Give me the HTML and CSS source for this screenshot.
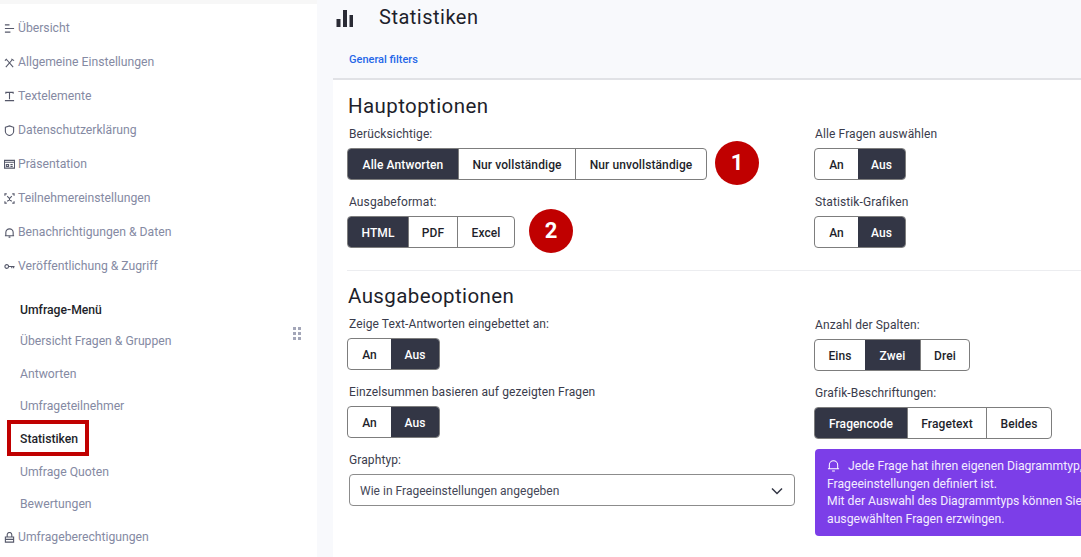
FILE: index.html
```html
<!DOCTYPE html>
<html lang="de">
<head>
  <meta charset="UTF-8">
  <title>Statistiken</title>
  <link rel="stylesheet" href="styles.css">
</head>
<body>
<div class="page">
  <div class="sidebar">
    <ul class="settings">
      <li><svg viewBox="0 0 12 12"><path d="M1 2h5M1 6h10M1 10h6"/></svg>Übersicht</li>
      <li><svg viewBox="0 0 12 12"><path d="M2 11L9 3M10 11L3 3M1 4l2-2M8 2l3 2"/></svg>Allgemeine Einstellungen</li>
      <li><svg viewBox="0 0 12 12"><path d="M2 3V1.500h8V3M6 1.500V9M1 10.500h10"/></svg>Textelemente</li>
      <li><svg viewBox="0 0 12 12"><path d="M1.500 2.500L6 1l4.500 1.500V7C10.500 9 8 11 6 11.500 4 11 1.500 9 1.500 7z"/></svg>Datenschutzerklärung</li>
      <li><svg viewBox="0 0 12 12"><path d="M.5 1.500h11v8.500H.5zM.5 3.500h11M2.500 6h2.500v2H2.500zM7 6h2.500M7 8h2.500"/></svg>Präsentation</li>
      <li><svg viewBox="0 0 12 12"><path d="M1 3V1h2M9 1h2v2M1 9v2h2M11 9v2H9M3.500 3.500l2 2M8.500 3.500l-2 2M6 5v3M3.500 9L6 7.500 8.500 9"/></svg>Teilnehmereinstellungen</li>
      <li><svg viewBox="0 0 12 12"><path d="M2 9.500V6a4 4 0 0 1 8 0v3.500M1 9.500h10M5 11h2"/></svg>Benachrichtigungen &amp; Daten</li>
      <li><svg viewBox="0 0 12 12"><circle cx="3" cy="6" r="2"/><path d="M5 6h6.500M8.500 6v2M10.500 6v2"/></svg>Veröffentlichung &amp; Zugriff</li>
    </ul>
    <div class="menu-title">Umfrage-Menü</div>
    <div class="drag"><i></i><i></i><i></i><i></i><i></i><i></i></div>
    <ul class="survey">
      <li>Übersicht Fragen &amp; Gruppen</li>
      <li>Antworten</li>
      <li>Umfrageteilnehmer</li>
      <li class="current">Statistiken<span class="redbox"></span></li>
      <li>Umfrage Quoten</li>
      <li>Bewertungen</li>
    </ul>
    <ul class="settings last">
      <li><svg viewBox="0 0 12 12"><path d="M1.500 5.500h9v5.500h-9zM3.500 5.500V3a2.500 2.500 0 0 1 5 0v2.500M1.500 8h9"/></svg>Umfrageberechtigungen</li>
    </ul>
  </div>

  <div class="main">
    <div class="top">
      <div class="title-row">
        <svg class="chart" viewBox="0 0 16 17"><path d="M0 9h4v8H0zM6.500 0h4v17h-4zM13 5h3.500v12H13z"/></svg>
        <span class="title">Statistiken</span>
      </div>
      <a class="filters">General filters</a>
    </div>

    <div class="content">
      <div class="block first">
        <div class="col">
          <h2>Hauptoptionen</h2>
          <label>Berücksichtige:</label>
          <div class="row gap-8">
            <div class="btns">
              <span class="on w110">Alle Antworten</span><span class="w117">Nur vollständige</span><span class="w131">Nur unvollständige</span>
            </div>
            <div class="num">1</div>
          </div>
          <label>Ausgabeformat:</label>
          <div class="row gap-14">
            <div class="btns">
              <span class="on w60">HTML</span><span class="w49">PDF</span><span class="w57">Excel</span>
            </div>
            <div class="num">2</div>
          </div>
        </div>
        <div class="col right">
          <label>Alle Fragen auswählen</label>
          <div class="btns">
            <span class="w43">An</span><span class="on w47">Aus</span>
          </div>
          <label>Statistik-Grafiken</label>
          <div class="btns">
            <span class="w43">An</span><span class="on w47">Aus</span>
          </div>
        </div>
      </div>

      <hr>

      <div class="block second">
        <div class="col">
          <h2>Ausgabeoptionen</h2>
          <label>Zeige Text-Antworten eingebettet an:</label>
          <div class="btns">
            <span class="w43">An</span><span class="on w48">Aus</span>
          </div>
          <label>Einzelsummen basieren auf gezeigten Fragen</label>
          <div class="btns">
            <span class="w43">An</span><span class="on w48">Aus</span>
          </div>
          <label>Graphtyp:</label>
          <div class="select">
            Wie in Frageeinstellungen angegeben
            <svg viewBox="0 0 12 8"><path d="M1 1.500l5 5 5-5"/></svg>
          </div>
        </div>
        <div class="col right">
          <label>Anzahl der Spalten:</label>
          <div class="btns">
            <span class="w50">Eins</span><span class="on w55">Zwei</span><span class="w49">Drei</span>
          </div>
          <label>Grafik-Beschriftungen:</label>
          <div class="btns">
            <span class="on w92">Fragencode</span><span class="w79">Fragetext</span><span class="w65">Beides</span>
          </div>
          <div class="alert">
            <svg viewBox="0 0 14 14"><path d="M2.500 10.500V6.500a4.500 4.500 0 0 1 9 0v4M1 10.500h12M5.500 13h3"/></svg>Jede Frage hat ihren eigenen Diagrammtyp,<br>
            Frageeinstellungen definiert ist.<br>
            Mit der Auswahl des Diagrammtyps können Sie<br>
            ausgewählten Fragen erzwingen.
          </div>
        </div>
      </div>
    </div>
  </div>
</div>
</body>
</html>
```
FILE: styles.css
```css
* {
  box-sizing: border-box;
}

html, body {
  margin: 0;
  height: 100%;
  overflow: hidden;
}

body {
  font-family: Roboto, Arial, sans-serif;
  background-color: #f8f9fc;
  color: #1e1f2b;
}

ul {
  list-style: none;
  margin: 0;
  padding: 0;
}

.page {
  display: flex;
  height: 557px;
  width: 1081px;
  overflow: hidden;
}

/* left menu */
.sidebar {
  position: relative;
  width: 317px;
  flex: none;
  background-color: #fff;
  border-top: 4px solid #f7f7f7;
  padding-top: 7px;
  font-size: 12.200px;
  color: #858aa3;
}

.settings li {
  display: flex;
  align-items: center;
  height: 34px;
  padding-left: 4px;
}

.settings svg {
  width: 11px;
  height: 11px;
  margin-right: 3px;
  flex: none;
  fill: none;
  stroke: #55586a;
  stroke-width: 1.200;
}

.settings.last {
  margin-top: -1px;
}

.menu-title {
  margin: 17px 0 0 20px;
  height: 20px;
  line-height: 20px;
  font-weight: 500;
  color: #1e1f2b;
}

.drag {
  position: absolute;
  left: 293px;
  top: 323px;
  display: grid;
  grid-template-columns: 3px 3px;
  gap: 2px 2px;
}

.drag i {
  width: 3px;
  height: 3px;
  background-color: #a3a6b8;
}

.survey {
  margin-top: 5px;
}

.survey li {
  position: relative;
  height: 32.700px;
  line-height: 32.700px;
  padding-left: 20px;
}

.survey li.current {
  color: #1e1f2b;
  font-weight: 500;
}

.redbox {
  position: absolute;
  left: 7px;
  top: -3px;
  width: 82px;
  height: 36px;
  border: 4px solid #c00000;
}

/* right part */
.main {
  margin-left: 16px;
  flex: 1;
  min-width: 0;
}

.top {
  height: 80px;
  border-bottom: 2px solid #e1e2e6;
}

.title-row {
  display: flex;
  align-items: center;
  height: 34px;
}

.chart {
  width: 17px;
  height: 17px;
  margin: 3px 0 0 3px;
  fill: #2a2b35;
}

.title {
  margin-left: 26px;
  font-size: 20px;
  letter-spacing: 0.5px;
}

.filters {
  display: block;
  margin: 19px 0 0 16px;
  font-size: 11px;
  font-weight: 500;
  color: #2667e8;
}

.content {
  background-color: #fff;
  height: 477px;
  padding-left: 14px;
}

.block {
  display: flex;
}

.col {
  width: 467px;
  flex: none;
}

.right {
  width: 400px;
}

h2 {
  margin: 0 0 0 1px;
  height: 28px;
  font-size: 20.500px;
  line-height: 28px;
  font-weight: 400;
  letter-spacing: 0.4px;
}

.first h2 {
  margin-top: 12px;
}

.second h2 {
  margin-bottom: 1px;
}

.first .right {
  padding-top: 40px;
}

.second .right {
  padding-top: 29px;
}

label {
  display: block;
  height: 15px;
  line-height: 15px;
  margin: 7px 0 6px 2px;
  font-size: 12px;
  letter-spacing: 0.11px;
  color: #3a3c4c;
}

.right label {
  margin-left: 1px;
}

.btns + label,
.row + label {
  margin-top: 15px;
}

.row {
  display: flex;
  align-items: center;
}

.gap-8 {
  gap: 8px;
}

.gap-14 {
  gap: 14px;
}

.num {
  width: 44px;
  height: 44px;
  margin: -7px 0 -5px;
  border-radius: 50%;
  background-color: #c00000;
  color: #fff;
  font-size: 22px;
  font-weight: 700;
  line-height: 44px;
  text-align: center;
}

.btns {
  display: inline-flex;
  height: 32px;
  border: 1px solid #7d7d7d;
  border-radius: 4px;
  background-color: #fff;
  font-size: 12px;
  font-weight: 500;
  letter-spacing: 0.1px;
  vertical-align: top;
}

.btns span {
  display: flex;
  align-items: center;
  justify-content: center;
  padding-top: 1px;
  border-left: 1px solid #7d7d7d;
}

.btns span:first-child {
  border-left: 0;
  border-radius: 3px 0 0 3px;
}

.btns span.on {
  background-color: #333645;
  color: #fff;
  border-left: 0;
}

.btns span:last-child.on {
  border-radius: 0 3px 3px 0;
}

.w43 { width: 43px; }
.w47 { width: 47px; }
.w48 { width: 48px; }
.w49 { width: 49px; }
.w50 { width: 50px; }
.w55 { width: 55px; }
.w57 { width: 57px; }
.w60 { width: 60px; }
.w65 { width: 65px; }
.w79 { width: 79px; }
.w92 { width: 92px; }
.w110 { width: 110px; }
.w117 { width: 117px; }
.w131 { width: 131px; }

hr {
  border: 0;
  border-top: 1px solid #ecedf0;
  margin: 22px 0 11px 0;
}

.select {
  display: flex;
  align-items: center;
  justify-content: space-between;
  width: 446px;
  height: 32px;
  margin-left: 2px;
  padding: 1px 11px 0 10px;
  border: 1px solid #8c8c8c;
  border-radius: 4px;
  font-size: 12px;
  letter-spacing: 0.02px;
  color: #454757;
}

.select svg {
  width: 12px;
  height: 8px;
  fill: none;
  stroke: #333645;
  stroke-width: 1.500;
}

.alert {
  width: 400px;
  height: 87px;
  margin-top: 10px;
  margin-left: 1px;
  padding: 9px 12px;
  border-radius: 4px 0 0 4px;
  background-color: #7c3ee8;
  color: #f3ecff;
  font-size: 12.200px;
  line-height: 17.500px;
  white-space: nowrap;
  overflow: hidden;
}

.alert svg {
  width: 13px;
  height: 13px;
  margin-right: 8px;
  vertical-align: -2px;
  fill: none;
  stroke: #fff;
  stroke-width: 1.100;
}
```
